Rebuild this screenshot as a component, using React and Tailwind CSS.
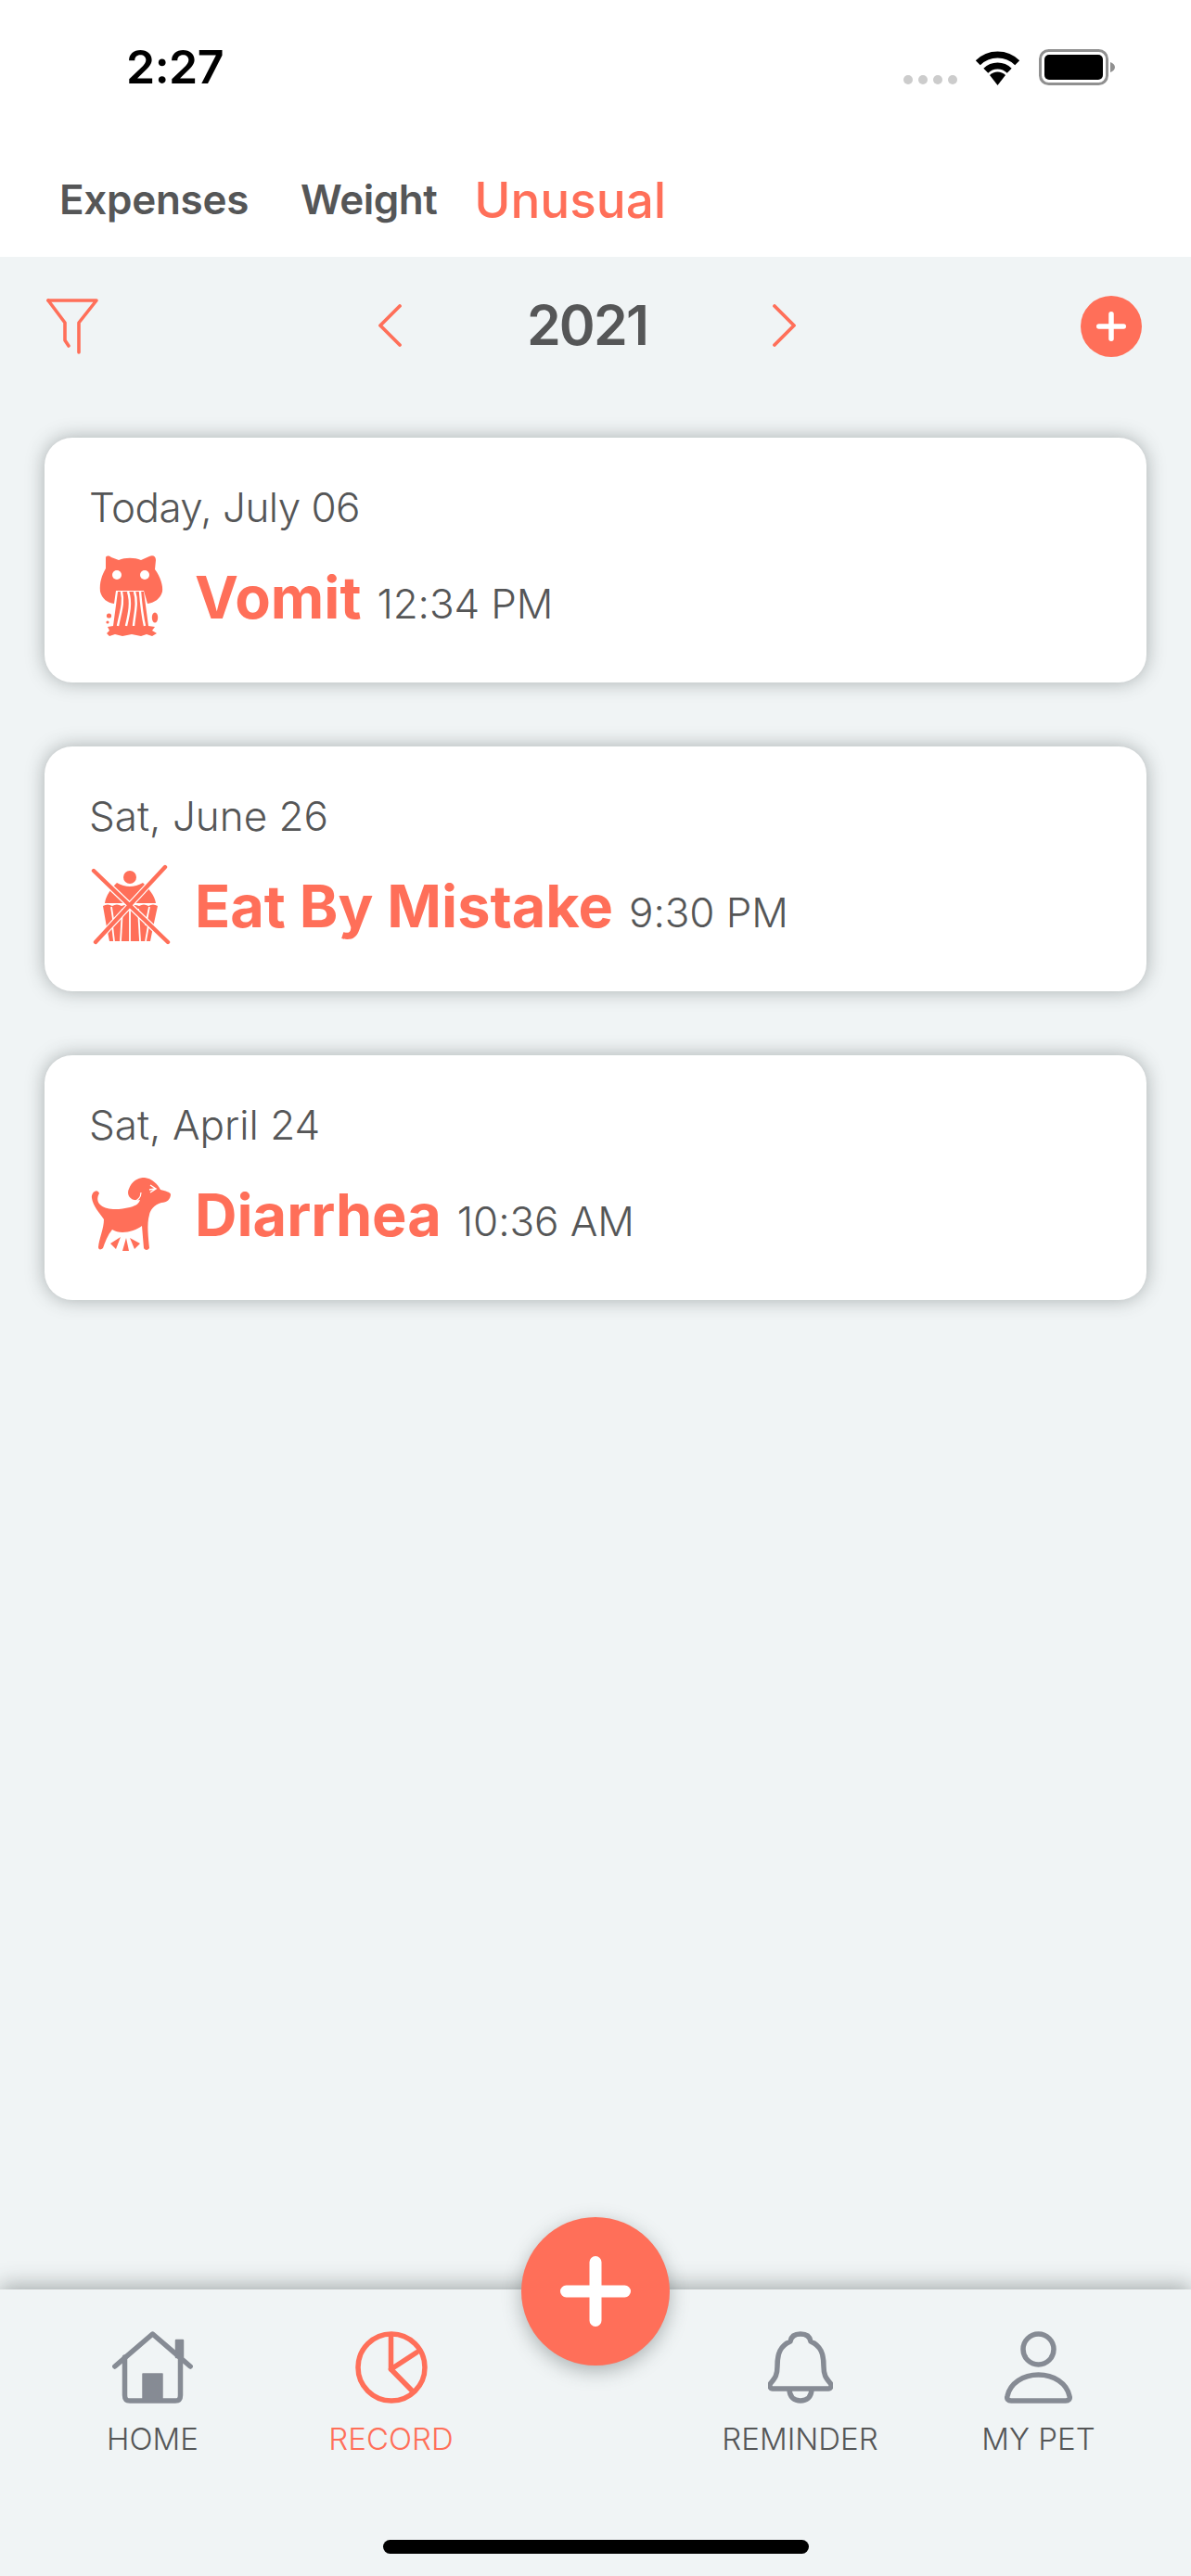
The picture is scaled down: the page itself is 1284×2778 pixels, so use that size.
import React from "react";

const C = "#ff6f59";
const G = "#868b94";

function Wifi() {
  return (
    <svg width="51" height="38" viewBox="0 0 51 38" fill="none" stroke="#000" strokeWidth="7">
      <path d="M4.3 13.8 A30 30 0 0 1 46.7 13.8" />
      <path d="M12.8 22.3 A18 18 0 0 1 38.2 22.3" />
      <path d="M25.5 38 L17 27 A12 12 0 0 1 34 27 Z" fill="#000" stroke="none" />
    </svg>
  );
}

function Battery() {
  return (
    <svg width="82" height="39" viewBox="0 0 82 39">
      <rect x="1.5" y="1.5" width="72" height="36" rx="9" fill="none" stroke="#909090" strokeWidth="3" />
      <rect x="6" y="6" width="63" height="27" rx="5" fill="#000" />
      <path d="M77 14 C80 15 82 17 82 19.5 C82 22 80 24 77 25 Z" fill="#909090" />
    </svg>
  );
}

function Filter() {
  return (
    <svg width="56" height="60" viewBox="0 0 56 60" fill="none" stroke={C} strokeWidth="3.6" strokeLinecap="round" strokeLinejoin="round">
      <path d="M2 2 H54 L35 26 V58" />
      <path d="M2 2 L20 26 V45 L24 51" />
    </svg>
  );
}

function Chevron({ right }) {
  return (
    <svg width="27" height="46" viewBox="0 0 27 46" fill="none" stroke={C} strokeWidth="3.8" strokeLinecap="round" strokeLinejoin="round">
      <path d={right ? "M3 2 L24 23 L3 44" : "M24 2 L3 23 L24 44"} />
    </svg>
  );
}

function VomitIcon() {
  return (
    <svg width="96" height="120" viewBox="18 4 96 120">
      <path fill={C} d="M34 22 C34 19 37 19 40 21 L48 24 C55 21 65 21 72 24 L81 20 C85 18 88 20 88 24 L87 34 C93 42 96 52 95 58 C93 66 86 70 79 71 L75 57 L45 57 L43 71 C36 70 30 66 28 58 C27 48 30 40 34 33 Z" />
      <circle cx="46" cy="40" r="5" fill="#fff" />
      <circle cx="76" cy="40" r="5" fill="#fff" />
      <path fill={C} d="M47 58 H75 L80 95 L87 96 L84 100 L89 103 L84 106 L78 104 L72 106 L62 104 L52 106 L44 104 L38 106 L35 103 L38 100 L36 96 L42 95 Z" />
      <g fill="none" stroke="#fff" strokeWidth="2.4">
        <path d="M51 58 C54 70 50 80 47 95" />
        <path d="M58 58 C62 70 59 82 56 95" />
        <path d="M65 58 C69 70 65 82 64 95" />
        <path d="M71 58 C72 70 73 82 76 95" />
      </g>
      <circle cx="37.5" cy="84" r="2.6" fill={C} />
      <circle cx="36" cy="91" r="1.6" fill={C} />
      <ellipse cx="87" cy="86" rx="3.2" ry="5.5" fill={C} />
    </svg>
  );
}

function CupcakeIcon() {
  return (
    <svg width="96" height="120" viewBox="18 -3 96 120">
      <circle cx="60" cy="26" r="7" fill={C} />
      <path fill={C} d="M33 54 C34 46 40 38 46 32 Q60 40 74 32 C80 38 87 46 88 54 Z" />
      <path fill={C} d="M31 57 Q36 54 41 57 Q46 54 51 57 Q56 55 60 57 Q65 55 70 57 Q75 54 80 57 Q85 54 90 57 L85 80 L82 95 H38 L35 80 Z" />
      <g fill="none" stroke="#fff" strokeWidth="1.8">
        <path d="M40 58 L43 78" />
        <path d="M52 60 L50 95" />
        <path d="M60 60 V95" />
        <path d="M69 60 L71 95" />
        <path d="M81 58 L77 78" />
        <path d="M43 95 L41 78" />
        <path d="M77 95 L80 78" />
      </g>
      <g fill="none" stroke="#fff" strokeWidth="6.8">
        <path d="M21 19 L101 96" />
        <path d="M98 15 L23 96" />
      </g>
      <g fill="none" stroke={C} strokeWidth="4.4" strokeLinecap="round">
        <path d="M21 19 L101 96" />
        <path d="M98 15 L23 96" />
      </g>
    </svg>
  );
}

function DogIcon() {
  return (
    <svg width="96" height="120" viewBox="18 0 96 120">
      <path fill={C} d="M19 42 C18 36 25 31 27 37 C24 42 25 47 29 50 C35 55 48 55 60 52 C68 50 70 47 71 44 C60 46 56 38 59 32 C62 24 68 20 76 20 C84 21 90 27 93 33 C98 34 104 36 104 38 C104 43 100 47 94 47 C86 49 82 55 81 60 C78 70 80 85 81 96 C79 99 76 98 75 96 L73 72 C65 78 50 82 41 76 C36 82 33 90 31 96 C29 98 26 98 26 95 C27 85 32 75 32 65 C27 58 20 50 19 42 Z" />
      <path d="M72 36 C72 41 69 45 62 47" fill="none" stroke="#fff" strokeWidth="1.2" />
      <path d="M82 28 L88 32 L82 36 M81 33 L87 32" fill="none" stroke="#fff" strokeWidth="1.5" />
      <path fill={C} d="M39 91 L50 84 L45 97 Z M52 99 L56 85 L59 99 Z M60 85 L71 91 L65 97 Z" />
    </svg>
  );
}

function HomeIcon() {
  return (
    <svg width="87" height="78" viewBox="0 0 87 78" fill="none" stroke={G} strokeWidth="5.5" strokeLinecap="round" strokeLinejoin="round">
      <rect x="69" y="10" width="7" height="18" fill={G} stroke={G} strokeWidth="2.5" />
      <path d="M2.8 38 L43.5 3 L84.2 38" />
      <path d="M13.5 28 V69 C13.5 73 15 75 19 75 H68 C72 75 73.5 73 73.5 69 V28" />
      <path d="M33 46 H54 V75 H33 Z" fill={G} stroke={G} strokeWidth="1.5" />
    </svg>
  );
}

function PieIcon() {
  return (
    <svg width="78" height="78" viewBox="0 0 78 78" fill="none" stroke={C} strokeWidth="5.5" strokeLinecap="round" strokeLinejoin="round">
      <circle cx="39" cy="39" r="36" />
      <path d="M38.5 5 V41 L66 23" />
      <path d="M38.5 41 L62 65" />
    </svg>
  );
}

function BellIcon() {
  return (
    <svg width="70" height="78" viewBox="0 0 70 78" fill="none" stroke={G} strokeWidth="5.5" strokeLinejoin="round">
      <path d="M5 62 H65 C68 62 69 58 67 56 C62 50 60 47 60 38 C60 24 57 16 46 11 C45 5 41 3 35 3 C29 3 25 5 24 11 C13 16 10 24 10 38 C10 47 8 50 3 56 C1 58 2 62 5 62 Z" />
      <path d="M23 62 C23 72 29 75 35 75 C41 75 47 72 47 62" />
    </svg>
  );
}

function PersonIcon() {
  return (
    <svg width="73" height="78" viewBox="0 0 73 78" fill="none" stroke={G} strokeWidth="5.5" strokeLinejoin="round">
      <circle cx="36.5" cy="19.5" r="16.5" />
      <path d="M7 75 H66 C69 75 71 73 70 70 C67 56 53 47 36.5 47 C20 47 6 56 3 70 C2 73 4 75 7 75 Z" />
    </svg>
  );
}

function Plus({ size, stroke }) {
  return (
    <svg width={size} height={size} viewBox={`0 0 ${size} ${size}`} fill="none" stroke="#fff" strokeWidth={stroke} strokeLinecap="round">
      <path d={`M${size / 2} ${stroke / 2} V${size - stroke / 2} M${stroke / 2} ${size / 2} H${size - stroke / 2}`} />
    </svg>
  );
}

function Card({ date, title, time, icon, dateTracking = "tracking-normal" }) {
  return (
    <div className="h-[264px] rounded-[30px] bg-white pl-[50px] pt-[47px] shadow-[0_0_20px_rgba(50,60,60,0.38)]">
      <div className={`ml-[-2px] h-[56px] text-[44px] font-[350] leading-[56px] text-[#555657] ${dateTracking}`}>{date}</div>
      <div className="mt-[9px] flex h-[120px] items-center">
        <div className="w-[112px] shrink-0">{icon}</div>
        <div className="flex items-baseline gap-[17px] whitespace-nowrap">
          <span className="text-[63px] font-bold leading-[76px] text-[#ff6f59]">{title}</span>
          <span className="text-[44px] font-[350] leading-[56px] tracking-[-0.1px] text-[#555657]">{time}</span>
        </div>
      </div>
    </div>
  );
}

function NavItem({ label, icon, active }) {
  return (
    <div className="flex w-[257px] flex-col items-center">
      <div className="flex h-[78px] items-center justify-center">{icon}</div>
      <div className={`mt-[18px] text-[33px] font-light leading-[40px] ${active ? "text-[#ff6f59]" : "text-[#555657]"}`}>{label}</div>
    </div>
  );
}

export default function App() {
  return (
    <div className="relative flex h-[2778px] w-[1284px] flex-col overflow-hidden bg-[#f0f4f5] font-['Inter',sans-serif]">
      <header className="h-[277px] shrink-0 bg-white">
        <div className="flex h-[110px] items-start justify-between pl-[136px] pr-[82px] pt-[48px]">
          <span className="text-[50px] font-semibold leading-[48px] tracking-[-0.5px] text-black">2:27</span>
          <div className="flex items-end pt-[5px]">
            <div className="mb-[1px] flex gap-[6px]">
              <span className="h-[10px] w-[10px] rounded-full bg-[#cccccc]" />
              <span className="h-[10px] w-[10px] rounded-full bg-[#cccccc]" />
              <span className="h-[10px] w-[10px] rounded-full bg-[#cccccc]" />
              <span className="h-[10px] w-[10px] rounded-full bg-[#cccccc]" />
            </div>
            <div className="ml-[18px]"><Wifi /></div>
            <div className="ml-[19px]"><Battery /></div>
          </div>
        </div>
        <div className="flex items-start pl-[64px] pt-[72px]">
          <span className="mt-[5px] text-[44px] font-semibold leading-[56px] tracking-[-0.3px] text-[#555657]">Expenses</span>
          <span className="ml-[56px] mt-[5px] text-[44px] font-semibold leading-[56px] tracking-[-0.5px] text-[#555657]">Weight</span>
          <span className="ml-[40px] text-[53px] font-medium leading-[68px] text-[#ff6f59]">Unusual</span>
        </div>
      </header>

      <main className="flex-1 px-[48px]">
        <div className="flex h-[195px] items-start pt-[42px]">
          <div className="w-[359px] pl-[2px] pt-[3px]"><Filter /></div>
          <div className="flex w-[452px] items-center justify-between pt-[9px]">
            <Chevron />
            <span className="text-[59px] font-semibold leading-[46px] tracking-[-1.8px] text-[#555657]">2021</span>
            <Chevron right />
          </div>
          <div className="ml-[306px] flex h-[66px] w-[66px] items-center justify-center rounded-full bg-[#ff6f59]">
            <Plus size={32} stroke={5.5} />
          </div>
        </div>
        <div className="flex flex-col gap-[69px]">
          <Card date="Today, July 06" dateTracking="tracking-[-0.55px]" title="Vomit" time="12:34 PM" icon={<VomitIcon />} />
          <Card date="Sat, June 26" title="Eat By Mistake" time="9:30 PM" icon={<CupcakeIcon />} />
          <Card date="Sat, April 24" title="Diarrhea" time="10:36 AM" icon={<DogIcon />} />
        </div>
      </main>

      <nav className="relative h-[309px] shrink-0 bg-[#f0f4f5] pl-[36px] pt-[45px] shadow-[0_-4px_22px_rgba(50,60,60,0.4)]">
        <div className="flex">
          <NavItem label="HOME" icon={<HomeIcon />} />
          <NavItem label="RECORD" icon={<PieIcon />} active />
          <div className="w-[184px]" />
          <NavItem label="REMINDER" icon={<BellIcon />} />
          <NavItem label="MY PET" icon={<PersonIcon />} />
        </div>
        <div className="absolute bottom-[24px] left-[413px] h-[15px] w-[459px] rounded-full bg-black" />
        <div className="absolute left-[562px] top-[-78px] flex h-[160px] w-[160px] items-center justify-center rounded-full bg-[#ff6f59] shadow-[0_6px_20px_rgba(50,60,60,0.35)]">
          <Plus size={76} stroke={13} />
        </div>
      </nav>
    </div>
  );
}
